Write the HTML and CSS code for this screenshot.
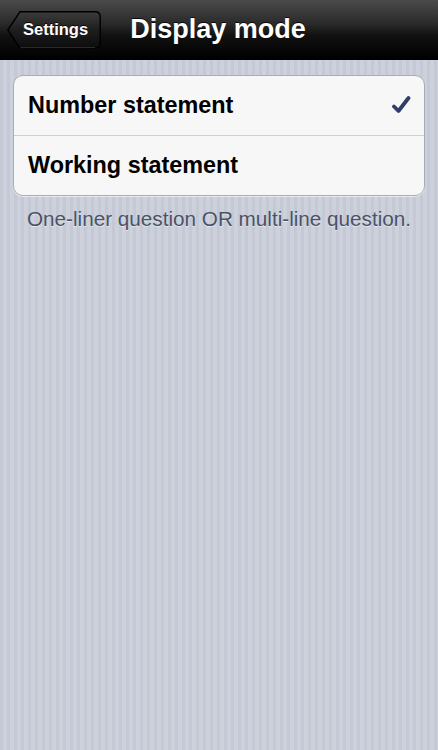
FILE: index.html
```html
<!DOCTYPE html>
<html lang="en">
<head>
    <meta charset="UTF-8">
    <meta name="viewport" content="width=device-width, initial-scale=1.0">
    <title>Display mode</title>
    <link rel="stylesheet" href="styles.css">
</head>
<body>
    <div class="navbar">
        <div class="nav-left">
            <button class="back">
                <svg class="back-shape" viewBox="0 0 94 38" width="94" height="38">
                    <defs>
                        <linearGradient id="backFill" x1="0" y1="0" x2="0" y2="1">
                            <stop offset="0" stop-color="#3c3c3c"/>
                            <stop offset="0.5" stop-color="#1e1e1e"/>
                            <stop offset="1" stop-color="#0c0c0c"/>
                        </linearGradient>
                    </defs>
                    <path d="M0.8 19 L13 0.8 H88 Q93.2 0.8 93.2 6 V32 Q93.2 37.2 88 37.2 H13 Z" fill="url(#backFill)" stroke="#000" stroke-width="1.4"/>
                    <path d="M13.5 36.6 H88" stroke="#3a3a3a" stroke-width="0.8"/>
                </svg>
                <span class="back-label">Settings</span>
            </button>
        </div>
        <h1>Display mode</h1>
        <div></div>
    </div>

    <div class="content">
        <div class="group">
            <div class="row">
                <span>Number statement</span>
                <svg class="check" viewBox="0 0 20 20" width="20" height="20">
                    <path d="M3 11.5 L7.5 16 L17.5 3" fill="none" stroke="#2e3d6b" stroke-width="3.8" stroke-linecap="round" stroke-linejoin="round"/>
                </svg>
            </div>
            <div class="row">
                <span>Working statement</span>
            </div>
        </div>
        <p class="footer">One-liner question OR multi-line question.</p>
    </div>
</body>
</html>
```

FILE: styles.css
```css
body {
    margin: 0;
    width: 438px;
    min-height: 750px;
    font-family: "Liberation Sans", Arial, sans-serif;
    background: repeating-linear-gradient(90deg, #c4c9d5 0, #c4c9d5 3px, #ccd1dc 3px, #ccd1dc 7px);
}
.navbar {
    height: 60px;
    display: grid;
    grid-template-columns: 1fr auto 1fr;
    align-items: center;
    background: linear-gradient(#4a4a4a 0, #2a2a2a 40%, #111 60%, #000 100%);
    border-bottom: 1px solid #000;
    box-sizing: border-box;
}
.nav-left {
    padding-left: 7px;
}
.back {
    display: grid;
    width: 94px;
    height: 38px;
    padding: 0;
    border: none;
    background: none;
    cursor: pointer;
}
.back-shape,
.back-label {
    grid-area: 1 / 1;
}
.back-label {
    align-self: center;
    text-align: left;
    padding-left: 16px;
    color: #fff;
    font-family: "Liberation Sans", Arial, sans-serif;
    font-weight: bold;
    font-size: 16.5px;
    text-shadow: 0 -1px 0 rgba(0,0,0,0.8);
}
h1 {
    margin: 0;
    color: #fff;
    font-size: 27px;
    font-weight: bold;
    text-shadow: 0 -1px 0 rgba(0,0,0,0.8);
    transform: translateX(-1px);
}
.content {
    padding: 15px 13px;
}
.group {
    background-color: #f7f7f7;
    border: 1px solid #a8acb5;
    border-radius: 10px;
    box-shadow: 0 1px 0 rgba(255,255,255,0.6);
    overflow: hidden;
}
.row {
    height: 59px;
    display: flex;
    align-items: center;
    justify-content: space-between;
    padding: 0 13px 0 14px;
    font-size: 23.4px;
    font-weight: bold;
    color: #000;
}
.row + .row {
    border-top: 1px solid #cfcfcf;
}
.check {
    margin-top: -2px;
}
.footer {
    margin: 11px 0 0;
    padding-left: 14px;
    font-size: 20.7px;
    line-height: 24px;
    color: #4a5267;
    text-shadow: 0 1px 0 rgba(255,255,255,0.5);
}
```
